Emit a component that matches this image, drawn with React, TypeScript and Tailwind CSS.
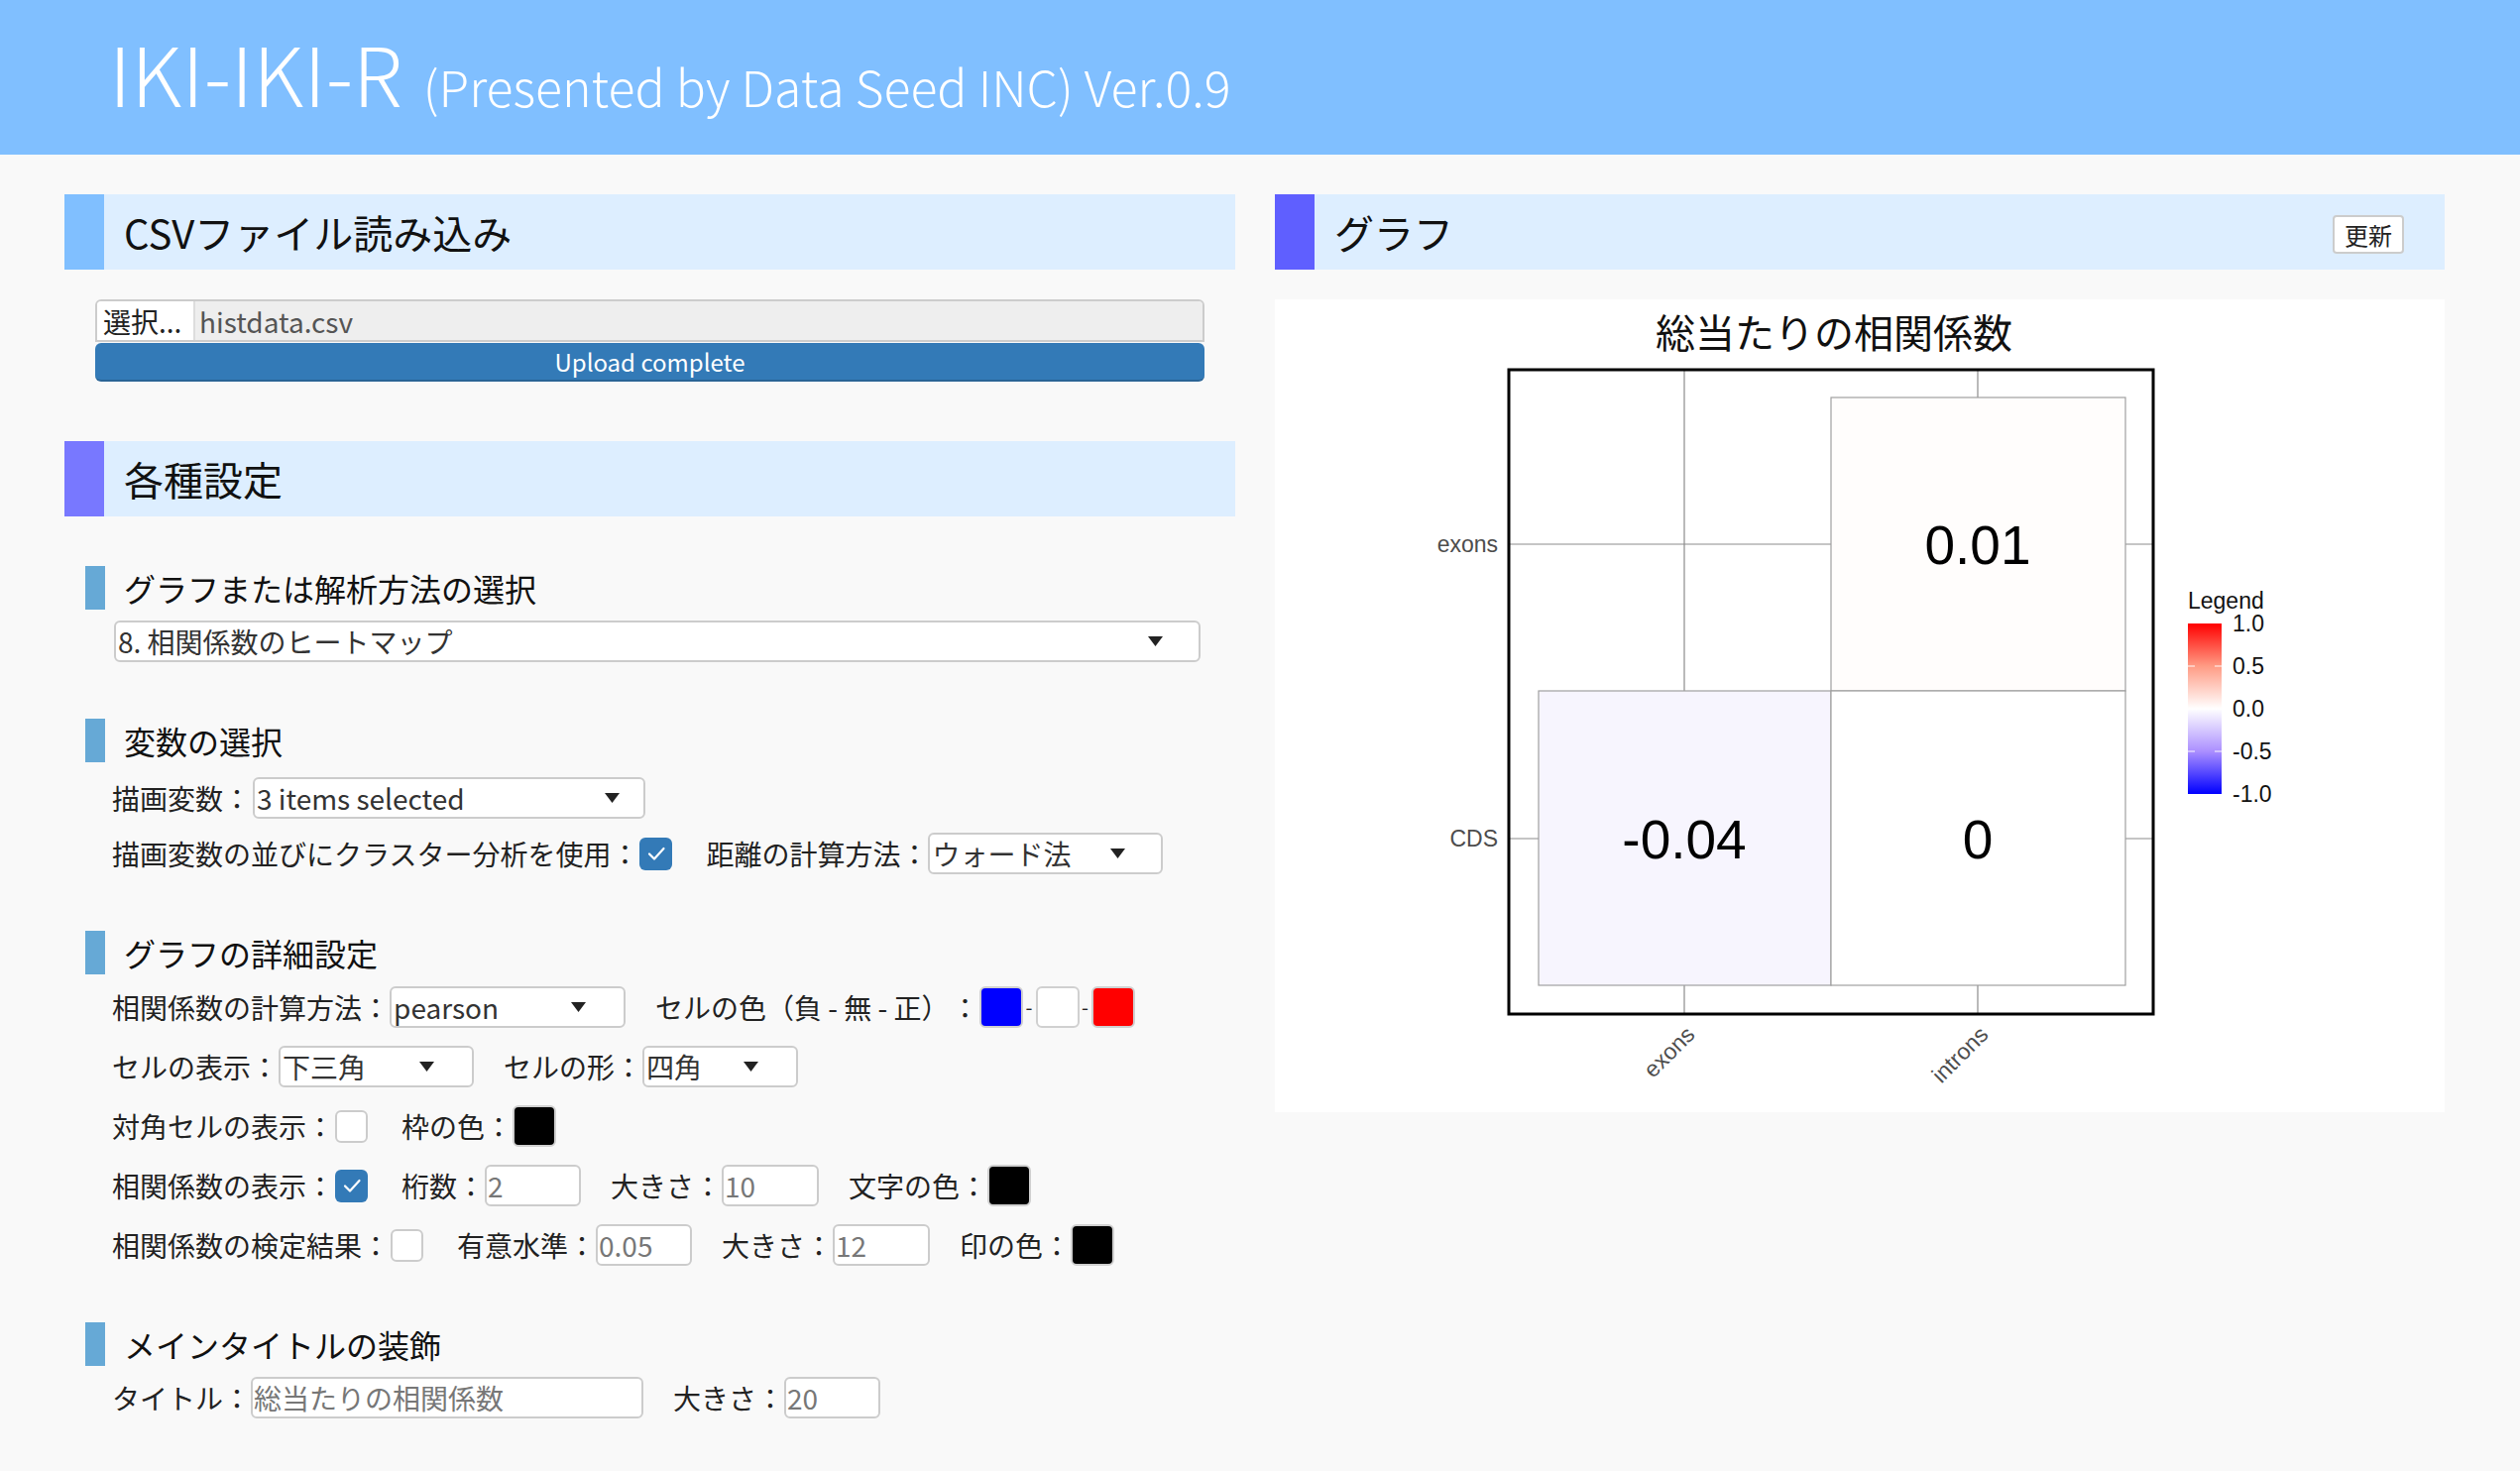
import React from 'react';

const Arrow = () => (
  <svg width="15" height="10" viewBox="0 0 15 10" className="shrink-0">
    <path d="M0 0h15L7.5 10z" fill="#222" />
  </svg>
);

const Check = () => (
  <svg width="22" height="22" viewBox="0 0 22 22">
    <path d="M4 11.5l5 5L18.5 6" fill="none" stroke="#fff" strokeWidth="2.2" strokeLinecap="round" strokeLinejoin="round" />
  </svg>
);

const SectionHeader = ({ title, bar }: { title: string; bar: string }) => (
  <div className="flex h-[76px] items-center bg-[#ddeeff]">
    <div className={`h-full w-[40px] ${bar}`} />
    <div className="pl-[20px] text-[40px] text-[#111]">{title}</div>
  </div>
);

const SubHeader = ({ title, className }: { title: string; className: string }) => (
  <div className={`ml-[21px] flex h-[44px] items-center ${className}`}>
    <div className="h-full w-[20px] bg-[#66a9d6]" />
    <div className="pl-[19px] text-[32px] text-[#111]">{title}</div>
  </div>
);

const Select = ({ value, className }: { value: string; className: string }) => (
  <div
    className={`flex h-[42px] items-center justify-between rounded-[6px] border-2 border-[#cccccc] bg-white pl-[2px] text-[28px] text-[#333] ${className}`}
  >
    <span className="leading-none">{value}</span>
    <Arrow />
  </div>
);

const Input = ({ value, className }: { value: string; className: string }) => (
  <div
    className={`flex h-[42px] items-center rounded-[6px] border-2 border-[#cccccc] bg-white pl-[1px] text-[28px] text-[#777] ${className}`}
  >
    <span className="leading-none">{value}</span>
  </div>
);

const Checkbox = ({ checked }: { checked?: boolean }) =>
  checked ? (
    <div className="ml-[1px] mr-[4px] flex h-[33px] w-[33px] items-center justify-center rounded-[6px] bg-[#337ab7]">
      <Check />
    </div>
  ) : (
    <div className="ml-[1px] mr-[4px] h-[33px] w-[33px] rounded-[6px] border-2 border-[#cccccc] bg-white" />
  );

const Swatch = ({ color }: { color: string }) => (
  <div className={`h-[42px] w-[44px] rounded-[6px] border-2 border-[#d0d0d0] ${color}`} />
);

const Row = ({ children, className }: { children: React.ReactNode; className: string }) => (
  <div className={`ml-[48px] flex h-[42px] items-center gap-[30px] text-[28px] text-[#222] ${className}`}>
    {children}
  </div>
);

const Group = ({ children }: { children: React.ReactNode }) => (
  <div className="flex items-center">{children}</div>
);

const Plot = () => (
  <svg width="1180" height="820" viewBox="0 0 1180 820">
    <text
      x="564"
      y="49"
      textAnchor="middle"
      fontSize="40"
      fontFamily="Noto Sans CJK JP, sans-serif"
      fill="#111"
    >
      総当たりの相関係数
    </text>
    <line x1="413" y1="71" x2="413" y2="721" stroke="#8c8c8c" strokeWidth="1.2" />
    <line x1="709" y1="71" x2="709" y2="721" stroke="#8c8c8c" strokeWidth="1.2" />
    <line x1="236" y1="247" x2="886" y2="247" stroke="#8c8c8c" strokeWidth="1.2" />
    <line x1="236" y1="544" x2="886" y2="544" stroke="#8c8c8c" strokeWidth="1.2" />
    <rect x="561" y="99" width="297" height="296" fill="#fffdfc" stroke="#a0a0a0" strokeWidth="1.2" />
    <rect x="266" y="395" width="295" height="297" fill="#f7f5fe" stroke="#a0a0a0" strokeWidth="1.2" />
    <rect x="561" y="395" width="297" height="297" fill="#ffffff" stroke="#a0a0a0" strokeWidth="1.2" />
    <g fontFamily="Liberation Sans, Arial, sans-serif" fontSize="55" fill="#000" textAnchor="middle">
      <text x="709" y="267">0.01</text>
      <text x="413" y="564">-0.04</text>
      <text x="709" y="564">0</text>
    </g>
    <rect x="236" y="71" width="650" height="650" fill="none" stroke="#000" strokeWidth="3" />
    <g fontFamily="Liberation Sans, Arial, sans-serif" fontSize="23" fill="#4d4d4d">
      <text x="225" y="255" textAnchor="end">exons</text>
      <text x="225" y="552" textAnchor="end">CDS</text>
      <text x="425" y="743" textAnchor="end" transform="rotate(-45 425 743)">exons</text>
      <text x="721" y="743" textAnchor="end" transform="rotate(-45 721 743)">introns</text>
    </g>
    <defs>
      <linearGradient id="leg" x1="0" y1="0" x2="0" y2="1">
        <stop offset="0" stopColor="#ff0000" />
        <stop offset="0.25" stopColor="#ff9b84" />
        <stop offset="0.5" stopColor="#ffffff" />
        <stop offset="0.75" stopColor="#ab8fff" />
        <stop offset="1" stopColor="#0000ff" />
      </linearGradient>
    </defs>
    <g fontFamily="Liberation Sans, Arial, sans-serif" fontSize="23" fill="#111">
      <text x="921" y="312">Legend</text>
      <text x="966" y="335">1.0</text>
      <text x="966" y="378">0.5</text>
      <text x="966" y="421">0.0</text>
      <text x="966" y="464">-0.5</text>
      <text x="966" y="507">-1.0</text>
    </g>
    <rect x="921" y="327" width="34" height="172" fill="url(#leg)" />
    {[370, 413, 456].map((y) => (
      <g key={y} stroke="#fff" strokeWidth="1.2" opacity="0.8">
        <line x1="921" y1={y} x2="928" y2={y} />
        <line x1="948" y1={y} x2="955" y2={y} />
      </g>
    ))}
  </svg>
);

const App = () => {
  return (
    <div className="min-h-screen bg-[#f9f9f9] font-['Noto_Sans_CJK_JP',sans-serif]">
      <div className="flex h-[156px] items-center bg-[#80bfff] pb-[10px] pl-[110px] text-white">
        <div className="flex items-baseline">
          <span className="text-[82px] font-light leading-none">IKI-IKI-R</span>
          <span className="ml-[21px] text-[50px] font-light leading-none">(Presented by Data Seed INC) Ver.0.9</span>
        </div>
      </div>

      <div className="flex gap-[40px] pl-[65px] pt-[40px]">
        <div className="w-[1181px]">
          <SectionHeader title="CSVファイル読み込み" bar="bg-[#80bfff]" />
          <div className="mx-[31px] mt-[30px]">
            <div className="flex h-[43px] overflow-hidden rounded-t-[6px] border-2 border-[#cccccc] text-[28px]">
              <div className="flex w-[99px] items-center border-r-2 border-[#dddddd] bg-white pl-[6px] text-[#222]">
                選択...
              </div>
              <div className="flex flex-1 items-center bg-[#eeeeee] pl-[4px] text-[#555]">histdata.csv</div>
            </div>
            <div className="mt-[1px] flex h-[39px] items-center justify-center rounded-[6px] border-b-2 border-[#2a6496] bg-[#337ab7] text-[24px] text-white">
              Upload complete
            </div>
          </div>

          <div className="mt-[60px]">
            <SectionHeader title="各種設定" bar="bg-[#7878ff]" />
          </div>

          <SubHeader title="グラフまたは解析方法の選択" className="mt-[50px]" />
          <Select value="8. 相関係数のヒートマップ" className="ml-[50px] mt-[11px] w-[1096px] pr-[36px]" />

          <SubHeader title="変数の選択" className="mt-[57px]" />
          <Row className="mt-[15px]">
            <Group>
              <span>描画変数：</span>
              <Select value="3 items selected" className="ml-[2px] w-[396px] pr-[24px]" />
            </Group>
          </Row>
          <Row className="mt-[14px]">
            <Group>
              <span>描画変数の並びにクラスター分析を使用：</span>
              <Checkbox checked />
            </Group>
            <Group>
              <span>距離の計算方法：</span>
              <Select value="ウォード法" className="w-[237px] pr-[36px]" />
            </Group>
          </Row>

          <SubHeader title="グラフの詳細設定" className="mt-[57px]" />
          <div className="mt-[12px] flex flex-col gap-[18px]">
            <Row className="">
              <Group>
                <span>相関係数の計算方法：</span>
                <Select value="pearson" className="w-[238px] pr-[38px]" />
              </Group>
              <Group>
                <span>セルの色（負 - 無 - 正）</span>
                <span className="ml-[2px]">：</span>
                <Swatch color="bg-[#0000ff]" />
                <span className="w-[13px] text-center text-[20px]">-</span>
                <Swatch color="bg-white" />
                <span className="w-[12px] text-center text-[20px]">-</span>
                <Swatch color="bg-[#ff0000]" />
              </Group>
            </Row>
            <Row className="">
              <Group>
                <span>セルの表示：</span>
                <Select value="下三角" className="w-[197px] pr-[38px]" />
              </Group>
              <Group>
                <span>セルの形：</span>
                <Select value="四角" className="w-[157px] pr-[38px]" />
              </Group>
            </Row>
            <Row className="">
              <Group>
                <span>対角セルの表示：</span>
                <Checkbox />
              </Group>
              <Group>
                <span>枠の色：</span>
                <Swatch color="bg-black" />
              </Group>
            </Row>
            <Row className="">
              <Group>
                <span>相関係数の表示：</span>
                <Checkbox checked />
              </Group>
              <Group>
                <span>桁数：</span>
                <Input value="2" className="w-[97px]" />
              </Group>
              <Group>
                <span>大きさ：</span>
                <Input value="10" className="w-[98px]" />
              </Group>
              <Group>
                <span>文字の色：</span>
                <Swatch color="bg-black" />
              </Group>
            </Row>
            <Row className="">
              <Group>
                <span>相関係数の検定結果：</span>
                <Checkbox />
              </Group>
              <Group>
                <span>有意水準：</span>
                <Input value="0.05" className="w-[97px]" />
              </Group>
              <Group>
                <span>大きさ：</span>
                <Input value="12" className="w-[98px]" />
              </Group>
              <Group>
                <span>印の色：</span>
                <Swatch color="bg-black" />
              </Group>
            </Row>
          </div>

          <SubHeader title="メインタイトルの装飾" className="mt-[57px]" />
          <Row className="mt-[11px]">
            <Group>
              <span>タイトル：</span>
              <Input value="総当たりの相関係数" className="w-[396px]" />
            </Group>
            <Group>
              <span>大きさ：</span>
              <Input value="20" className="w-[97px]" />
            </Group>
          </Row>
        </div>

        <div className="w-[1180px]">
          <div className="flex h-[76px] items-center bg-[#ddeeff]">
            <div className="h-full w-[40px] bg-[#5f5fff]" />
            <div className="flex-1 pl-[20px] text-[40px] text-[#111]">グラフ</div>
            <div className="mr-[41px] mt-[5px] flex h-[39px] w-[72px] items-center justify-center rounded-[4px] border-2 border-[#cccccc] bg-white text-[24px] text-[#222]">
              更新
            </div>
          </div>
          <div className="mt-[30px] h-[820px] bg-white">
            <Plot />
          </div>
        </div>
      </div>
    </div>
  );
};

export default App;
